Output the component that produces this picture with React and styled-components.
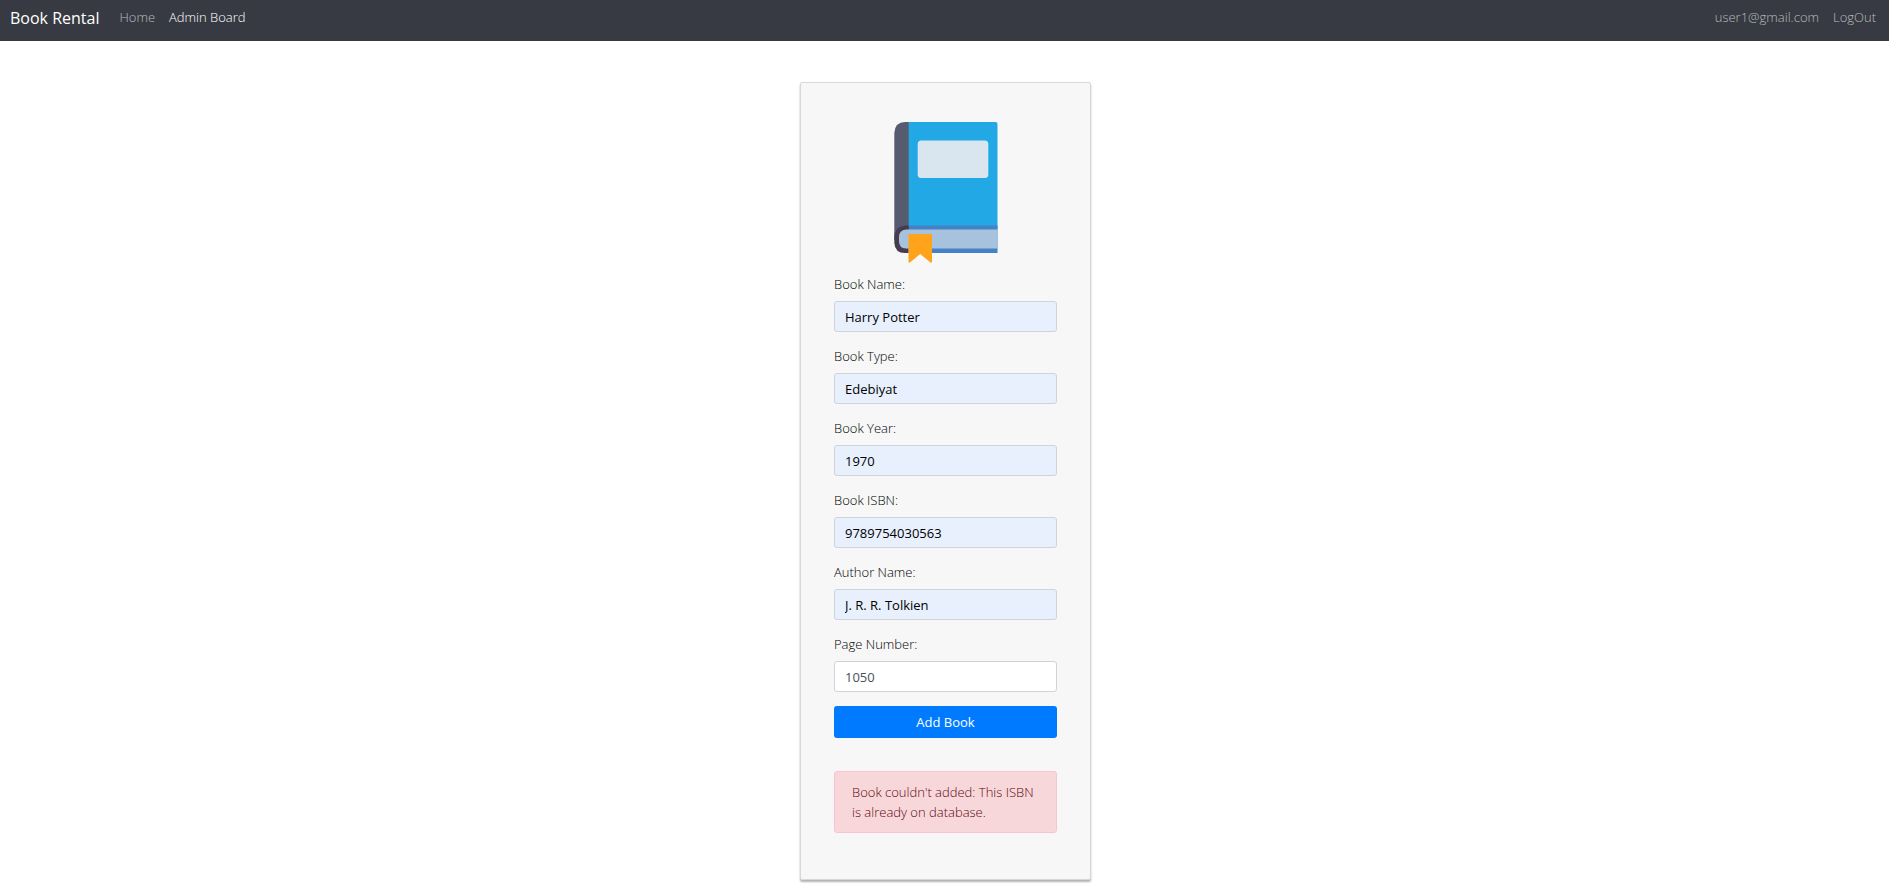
import React, { useState } from "react";
import styled, { createGlobalStyle } from "styled-components";

const GlobalStyle = createGlobalStyle`
  *, *::before, *::after { box-sizing: border-box; }
  body {
    margin: 0;
    background: #fff;
    color: #000;
    font-family: "Open Sans", "Noto Sans", sans-serif;
    font-size: 13px;
    font-weight: 300;
    line-height: 20px;
  }
`;

const Navbar = styled.nav`
  display: flex;
  align-items: flex-start;
  padding: 6px 13px 10px 10px;
  background: #373a42;
`;

const Brand = styled.a`
  margin-right: 20px;
  color: #fff;
  font-size: 16px;
  font-weight: 400;
  line-height: 25px;
  text-decoration: none;
`;

const NavGroup = styled.div`
  display: flex;
  gap: 14px;
  margin-left: ${(p) => (p.$end ? "auto" : "0")};
  line-height: 22px;
`;

const NavLink = styled.a`
  color: ${(p) => (p.$active ? "#fff" : "#b8babd")};
  text-decoration: none;
`;

const Main = styled.main`
  display: flex;
  justify-content: center;
  padding: 41px 12px 9px 14px;
`;

const Card = styled.section`
  width: 100%;
  max-width: 291px;
  padding: 38px 33px 46px;
  background: #f7f7f7;
  border: 1px solid #d8d8d8;
  border-radius: 2px;
  box-shadow: 0 2px 2px rgba(0, 0, 0, 0.3);
`;

const BookIcon = styled.svg`
  display: block;
  width: 104px;
  height: 142px;
  margin: 0 auto 11px;
`;

const Form = styled.form`
  display: flex;
  flex-direction: column;
`;

const Field = styled.div`
  display: flex;
  flex-direction: column;
  gap: 7px;
  margin-bottom: 14px;
`;

const Input = styled.input`
  width: 100%;
  height: 31px;
  padding: 1px 10px 0;
  border: 1px solid #ced4da;
  border-radius: 3px;
  background: ${(p) => (p.$filled ? "#e8f0fe" : "#fff")};
  color: ${(p) => (p.$filled ? "#000" : "#495057")};
  font: inherit;
  font-weight: 400;
`;

const SubmitButton = styled.button`
  height: 32px;
  border: 0;
  border-radius: 3px;
  background: #007bff;
  color: #fff;
  font: inherit;
  font-weight: 400;
  cursor: pointer;
`;

const Alert = styled.div`
  margin-top: 33px;
  padding: 10px 12px 10px 17px;
  border: 1px solid #f5c6cb;
  border-radius: 3px;
  background: #f8d7da;
  color: #5c0710;
`;

const FIELDS = [
  { id: "name", label: "Book Name:", value: "Harry Potter", filled: true },
  { id: "type", label: "Book Type:", value: "Edebiyat", filled: true },
  { id: "year", label: "Book Year:", value: "1970", filled: true },
  { id: "isbn", label: "Book ISBN:", value: "9789754030563", filled: true },
  { id: "author", label: "Author Name:", value: "J. R. R. Tolkien", filled: true },
  { id: "pages", label: "Page Number:", value: "1050", filled: false },
];

function Book() {
  return (
    <BookIcon viewBox="14 11 104 142" aria-hidden="true">
      <path d="M14.3 23Q15 12 25 12H29V130H14.3Z" fill="#565b70" />
      <path d="M28.7 12H115.5Q117.5 12 117.5 14V119H28.7Z" fill="#23a8e6" />
      <rect x="37.7" y="30.5" width="70.6" height="37.5" rx="3.5" fill="#d9e6f0" />
      <path d="M28.7 115.5H117.5V143H28.7Z" fill="#4482c3" />
      <path d="M28.7 115.5H25Q14.3 117 14.3 127V133Q15 143 25 143H28.7Z" fill="#463c4f" />
      <path d="M117.5 119.5H26Q19 120 19 127V131Q19 138.5 26 138.5H117.5Z" fill="#a6c2dd" />
      <path d="M28.5 124H52V152.5H50.5L40.2 144L30 152.5H28.5Z" fill="#ffa31a" />
    </BookIcon>
  );
}

export default function App() {
  const [values, setValues] = useState(() =>
    Object.fromEntries(FIELDS.map((f) => [f.id, f.value]))
  );

  return (
    <>
      <GlobalStyle />
      <Navbar>
        <Brand href="#">Book Rental</Brand>
        <NavGroup>
          <NavLink href="#">Home</NavLink>
          <NavLink href="#" $active>Admin Board</NavLink>
        </NavGroup>
        <NavGroup $end>
          <NavLink href="#">user1@gmail.com</NavLink>
          <NavLink href="#">LogOut</NavLink>
        </NavGroup>
      </Navbar>
      <Main>
        <Card>
          <Book />
          <Form onSubmit={(e) => e.preventDefault()}>
            {FIELDS.map((f) => (
              <Field key={f.id}>
                <label htmlFor={f.id}>{f.label}</label>
                <Input
                  id={f.id}
                  type="text"
                  $filled={f.filled}
                  value={values[f.id]}
                  onChange={(e) => setValues({ ...values, [f.id]: e.target.value })}
                />
              </Field>
            ))}
            <SubmitButton type="submit">Add Book</SubmitButton>
            <Alert role="alert">
              Book couldn't added: This ISBN is already on database.
            </Alert>
          </Form>
        </Card>
      </Main>
    </>
  );
}
